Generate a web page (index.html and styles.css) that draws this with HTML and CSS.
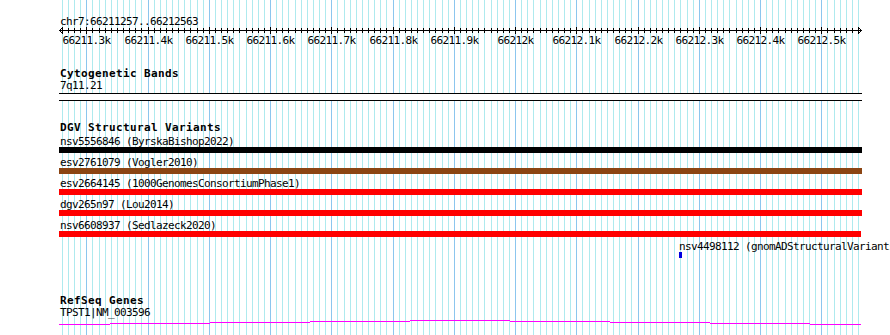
FILE: index.html
```html
<!DOCTYPE html>
<html lang="en">
<head>
    <meta charset="UTF-8">
    <meta name="viewport" content="width=device-width, initial-scale=1.0">
    <title>chr7:66211257-66212563</title>
    <link rel="stylesheet" href="styles.css">
</head>
<body>

<div class="browser">
    <!-- base position guide lines, filled in by script.js -->
    <svg id="grid" class="grid" width="890" height="335"></svg>

    <div class="tracks">
        <div class="position">chr7:66211257..66212563</div>
        <svg id="ruler" class="ruler" width="890" height="20">
            <line x1="59" y1="3.5" x2="862" y2="3.5"/>
            <polyline class="arrow" points="63,0 59.5,3.5 63,7"/>
            <polyline class="arrow" points="858,0 861.5,3.5 858,7"/>
        </svg>

        <div class="track-title cyto-title">Cytogenetic Bands</div>
        <div class="label band-label">7q11.21</div>
        <div class="band"></div>

        <div class="track-title dgv-title">DGV Structural Variants</div>
        <div class="variants">
            <div class="variant">
                <div class="label">nsv5556846 (ByrskaBishop2022)</div>
                <div class="bar bar-black"></div>
            </div>
            <div class="variant">
                <div class="label">esv2761079 (Vogler2010)</div>
                <div class="bar bar-brown"></div>
            </div>
            <div class="variant">
                <div class="label">esv2664145 (1000GenomesConsortiumPhase1)</div>
                <div class="bar bar-red"></div>
            </div>
            <div class="variant">
                <div class="label">dgv265n97 (Lou2014)</div>
                <div class="bar bar-red"></div>
            </div>
            <div class="variant">
                <div class="label">nsv6608937 (Sedlazeck2020)</div>
                <div class="bar bar-red bar-short"></div>
            </div>
            <div class="variant small">
                <div class="label">nsv4498112 (gnomADStructuralVariants)</div>
                <div class="bar bar-blue"></div>
            </div>
        </div>

        <div class="track-title refseq-title">RefSeq Genes</div>
        <div class="label gene-label">TPST1|NM_003596</div>
        <svg class="gene" width="890" height="10">
            <rect x="59" y="6" width="51" height="1"/>
            <rect x="110" y="5" width="100" height="1"/>
            <rect x="210" y="4" width="100" height="1"/>
            <rect x="310" y="3" width="100" height="1"/>
            <rect x="410" y="2" width="100" height="1"/>
            <rect x="510" y="3" width="100" height="1"/>
            <rect x="610" y="4" width="100" height="1"/>
            <rect x="710" y="5" width="100" height="1"/>
            <rect x="810" y="6" width="51" height="1"/>
        </svg>
    </div>
</div>

<script src="script.js"></script>
</body>
</html>
```

FILE: styles.css
```css
body { margin: 0; font-family: "DejaVu Sans Mono", monospace; font-size: 11px; line-height: 11px; color: #000; }
.browser { position: relative; width: 890px; height: 335px; overflow: hidden; background: #fff; }
.grid { position: absolute; top: 0; left: 0; }
.grid line { shape-rendering: crispEdges; }
.grid .minor { stroke: #aeeaee; }
.grid .major { stroke: #8cc6ee; }
.tracks { position: relative; padding-top: 16px; }

.position, .label { height: 11px; padding-left: 60px; letter-spacing: -0.62px; white-space: nowrap; }
.ruler { display: block; }
.ruler line { stroke: #000; shape-rendering: crispEdges; }
.ruler .arrow { fill: none; stroke: #000; stroke-width: 1; }
.ruler text { font-family: "DejaVu Sans Mono", monospace; font-size: 11px; letter-spacing: -0.62px; text-anchor: middle; }

.track-title { height: 11px; padding-left: 60px; font-weight: bold; letter-spacing: 0.38px; white-space: nowrap; }
.cyto-title { margin-top: 21px; }
.band-label { margin-top: 1px; }
.band { width: 803px; height: 8px; box-sizing: border-box; margin: 2px 0 0 59px; background: #fff; border-top: 1px solid #000; border-bottom: 1px solid #000; }

.dgv-title { margin-top: 21px; }
.variants { margin-top: 3px; padding-bottom: 1px; }
.variant { margin-bottom: 4px; }
.bar { width: 803px; height: 6px; margin-left: 59px; }
.bar-black { background: #000; }
.bar-brown { background: #8b4513; }
.bar-red { background: #ff0000; }
.bar-short { width: 802px; }
.small .label { padding-left: 679px; }
.bar-blue { width: 3px; margin-left: 679px; background: #0000e0; }

.refseq-title { margin-top: 32px; }
.gene-label { margin-top: 1px; }
.gene { display: block; fill: #ff00ff; }
```

FILE: script.js
```js
// guide lines and ruler ticks for chr7:66211257..66212563
var START = 66211257;
var END = 66212563;
var PX_PER_BP = 0.6125;
var SVG_NS = "http://www.w3.org/2000/svg";

function bpToX(bp) {
    return Math.round(60 + (bp - START) * PX_PER_BP);
}

function addLine(svg, x, y1, y2, cls) {
    var line = document.createElementNS(SVG_NS, "line");
    line.setAttribute("x1", x + 0.5);
    line.setAttribute("x2", x + 0.5);
    line.setAttribute("y1", y1);
    line.setAttribute("y2", y2);
    line.setAttribute("class", cls);
    svg.appendChild(line);
}

var grid = document.getElementById("grid");
var ruler = document.getElementById("ruler");

for (var bp = Math.ceil(START / 10) * 10; bp <= END; bp += 10) {
    var x = bpToX(bp);
    var major = bp % 100 === 0;
    addLine(grid, x, 0, 335, major ? "major" : "minor");
    addLine(ruler, x, major ? 0 : 1, major ? 7 : 6, "tick");
    if (major) {
        // 66211300 -> "66211.3k"
        var label = document.createElementNS(SVG_NS, "text");
        label.setAttribute("x", x + 0.5);
        label.setAttribute("y", 17);
        label.textContent = (bp / 1000) + "k";
        ruler.appendChild(label);
    }
}
```
